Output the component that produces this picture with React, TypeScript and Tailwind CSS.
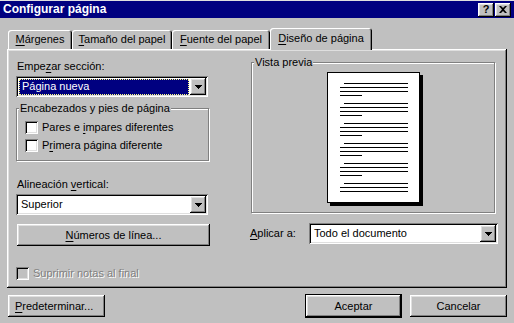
import type { ReactNode } from 'react';

const raised =
  'shadow-[inset_-1px_-1px_#000,inset_1px_1px_#fff,inset_-2px_-2px_#808080,inset_2px_2px_#dfdfdf]';
const sunken =
  'shadow-[inset_1px_1px_#808080,inset_-1px_-1px_#fff,inset_2px_2px_#000,inset_-2px_-2px_#dfdfdf]';
const etched = 'border border-[#808080] shadow-[inset_1px_1px_#fff,1px_1px_#fff]';

function Arrow() {
  return (
    <div className={`w-[16px] h-[17px] bg-[#c0c0c0] flex items-center justify-center ${raised}`}>
      <svg width="7" height="4" viewBox="0 0 7 4">
        <path d="M0 0h7v1H0zM1 1h5v1H1zM2 2h3v1H2zM3 3h1v1H3z" fill="#000" />
      </svg>
    </div>
  );
}

function Select({ value, focused, width }: { value: string; focused?: boolean; width: string }) {
  return (
    <div className={`${width} h-[21px] bg-white flex p-[2px] ${sunken}`}>
      <div className="flex-1 flex items-center pl-px pr-px">
        {focused ? (
          <div className="w-full h-[16px] bg-[#000080] border border-dotted border-[#ffff80] text-white flex items-center pl-[2px]">
            {value}
          </div>
        ) : (
          <span className="pl-[2px]">{value}</span>
        )}
      </div>
      <Arrow />
    </div>
  );
}

function Check({ label, disabled }: { label: ReactNode; disabled?: boolean }) {
  return (
    <div className="flex items-center h-[13px]">
      <div className={`w-[13px] h-[13px] ${disabled ? 'bg-[#c0c0c0]' : 'bg-white'} ${sunken}`} />
      <span
        className={`ml-[4px] ${disabled ? 'text-[#808080] [text-shadow:1px_1px_#fff]' : ''}`}
      >
        {label}
      </span>
    </div>
  );
}

function Tab({ children, width, selected }: { children: ReactNode; width: string; selected?: boolean }) {
  return (
    <div
      className={`${width} ${
        selected
          ? 'h-[22px] -mb-[1px] relative z-10 pt-[4px]'
          : 'h-[19px] pt-[3px]'
      } bg-[#c0c0c0] rounded-t-[3px] text-center shadow-[inset_1px_1px_#fff,inset_-1px_0_#000,inset_-2px_0_#808080]`}
    >
      {children}
    </div>
  );
}

function Group({ title, className, children }: { title: string; className: string; children?: ReactNode }) {
  return (
    <div className={`relative ${etched} ${className}`}>
      <span className="absolute -top-[7px] left-[2px] px-px bg-[#c0c0c0] leading-[13px]">{title}</span>
      {children}
    </div>
  );
}

function Paragraph({ last }: { last?: boolean }) {
  return (
    <div className="flex flex-col gap-[3px]">
      <div className="ml-[4px] w-[64px] h-px bg-black" />
      <div className="w-[68px] h-px bg-black" />
      <div className="w-[68px] h-px bg-black" />
      {!last && <div className="w-[22px] h-px bg-black" />}
    </div>
  );
}

export default function App() {
  return (
    <div
      className="w-[514px] h-[323px] bg-[#c0c0c0] text-black text-[11px] leading-[13px] border-t border-[#dfdfdf] flex flex-col select-none"
      style={{ fontFamily: '"Liberation Sans", Arial, sans-serif' }}
    >
      {/* title bar */}
      <div className="h-[17px] bg-[#000080] flex items-center pl-[3px] pr-[3px]">
        <span className="text-white font-bold text-[12px] flex-1">Configurar página</span>
        <div className="flex gap-[1px]">
          <div className={`w-[16px] h-[14px] bg-[#c0c0c0] flex items-center justify-center font-bold text-[11px] ${raised}`}>
            ?
          </div>
          <div className={`w-[16px] h-[14px] bg-[#c0c0c0] flex items-center justify-center ${raised}`}>
            <svg width="8" height="7" viewBox="0 0 8 7">
              <path d="M0 0h2l2 2 2-2h2L5 3.5 8 7H6L4 5 2 7H0l3-3.5z" fill="#000" />
            </svg>
          </div>
        </div>
      </div>

      {/* tabs */}
      <div className="h-[31px] flex items-end pl-[8px]">
        <Tab width="w-[64px]">
          <u className="underline-offset-2">M</u>árgenes
        </Tab>
        <Tab width="w-[100px]">
          <u className="underline-offset-2">T</u>amaño del papel
        </Tab>
        <Tab width="w-[98px]">
          <u className="underline-offset-2">F</u>uente del papel
        </Tab>
        <Tab width="w-[102px]" selected>
          <u className="underline-offset-2">D</u>iseño de página
        </Tab>
      </div>

      {/* panel */}
      <div className={`ml-[7px] w-[500px] h-[239px] flex ${raised}`}>
        <div className="ml-[9px] w-[194px] pt-[11px] flex flex-col">
          <div className="h-[13px] pl-px">
            Empe<u className="underline-offset-2">z</u>ar sección:
          </div>
          <div className="mt-[3px]">
            <Select value="Página nueva" focused width="w-[192px]" />
          </div>
          <Group title="Encabezados y pies de página" className="mt-[11px] w-[193px] h-[53px] pt-[12px] pl-[8px]">
            <div className="flex flex-col gap-[5px]">
              <Check
                label={
                  <>
                    Pares e <u className="underline-offset-2">i</u>mpares diferentes
                  </>
                }
              />
              <Check
                label={
                  <>
                    P<u className="underline-offset-2">r</u>imera página diferente
                  </>
                }
              />
            </div>
          </Group>
          <div className="mt-[17px] h-[13px] pl-px">
            Alineación <u className="underline-offset-2">v</u>ertical:
          </div>
          <div className="mt-[3px]">
            <Select value="Superior" width="w-[192px]" />
          </div>
          <div className={`mt-[9px] ml-px w-[193px] h-[22px] flex items-center justify-center ${raised}`}>
            <span>
              <u className="underline-offset-2">N</u>úmeros de línea...
            </span>
          </div>
          <div className="mt-[21px]">
            <Check label="Suprimir notas al final" disabled />
          </div>
        </div>

        <div className="ml-[40px] pt-[13px] flex flex-col">
          <Group title="Vista previa" className="ml-px w-[244px] h-[151px] pt-[9px] flex justify-center">
            <div className="w-[93px] h-[131px] bg-white border border-black shadow-[3px_3px_#000] pt-[10px] pl-[12px] flex flex-col gap-[7px]">
              <Paragraph />
              <Paragraph />
              <Paragraph />
              <Paragraph />
              <Paragraph />
              <Paragraph last />
            </div>
          </Group>
          <div className="mt-[10px] flex items-center">
            <span className="w-[59px]">
              <u className="underline-offset-2">A</u>plicar a:
            </span>
            <Select value="Todo el documento" width="w-[189px]" />
          </div>
        </div>
      </div>

      {/* buttons */}
      <div className="flex items-start pt-[7px]">
        <div className={`ml-[8px] w-[97px] h-[22px] flex items-center pl-[7px] ${raised}`}>
          <span>
            <u className="underline-offset-2">P</u>redeterminar...
          </span>
        </div>
        <div className="ml-auto -mt-px w-[97px] h-[24px] border border-black">
          <div className={`w-full h-full flex items-center justify-center ${raised}`}>Aceptar</div>
        </div>
        <div className={`ml-[8px] mr-[7px] w-[97px] h-[22px] flex items-center justify-center ${raised}`}>
          Cancelar
        </div>
      </div>
    </div>
  );
}
